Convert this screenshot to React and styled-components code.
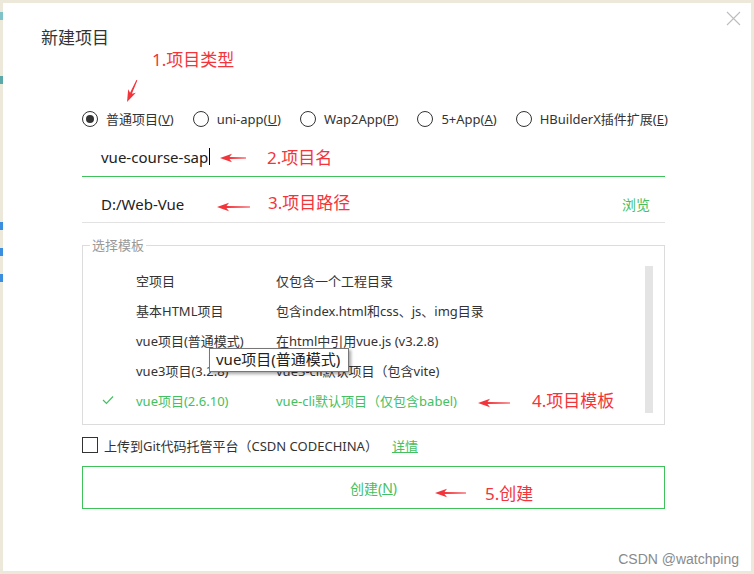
import React from "react";
import styled, { createGlobalStyle } from "styled-components";

const GREEN = "#44c062";
const LINE_GREEN = "#3fc25a";
const RED = "#f2353b";
const TEXT = "#333";
const FONT = `"Noto Sans", "Noto Sans CJK SC", sans-serif`;

const Global = createGlobalStyle`
  html, body { margin: 0; padding: 0; }
  body { font-family: ${FONT}; color: ${TEXT}; }
  * { box-sizing: border-box; }
`;

const mark = (c, y) => `linear-gradient(${c}, ${c}) 0 ${y}px / 3px 8px no-repeat`;

const Page = styled.div`
  width: 754px;
  height: 574px;
  background: ${mark("#7fc3c9", 12)}, ${mark("#5aa8a8", 76)}, ${mark("#3b8de0", 222)},
    ${mark("#3b8de0", 248)}, ${mark("#3b8de0", 274)}, #ece9db;
  padding: 3px;
  position: relative;
  overflow: hidden;
`;

const Dialog = styled.div`
  width: 748px;
  height: 568px;
  background: #fff;
  position: relative;
  padding-top: 23px;
`;

const Close = styled.svg`
  position: absolute;
  right: 10px;
  top: 8px;
`;

const Title = styled.div`
  margin-left: 38px;
  font-size: 17px;
  line-height: 24px;
  color: #333;
`;

const Body = styled.div`
  margin-left: 79px;
  width: 583px;
`;

const RadioRow = styled.div`
  margin-top: 59px;
  height: 20px;
  display: flex;
  align-items: center;
  gap: 19px;
`;

const Option = styled.label`
  display: flex;
  align-items: center;
  gap: 8px;
  font-size: 13px;
  line-height: 18px;
  color: ${TEXT};
  white-space: nowrap;
`;

const Radio = styled.span`
  width: 16px;
  height: 16px;
  border-radius: 50%;
  border: 1.5px solid #333;
  display: flex;
  align-items: center;
  justify-content: center;
  &::after {
    content: "";
    width: 8px;
    height: 8px;
    border-radius: 50%;
    background: ${(p) => (p.$checked ? "#333" : "transparent")};
  }
`;

const InputRow = styled.div`
  margin-top: 8px;
  height: 40px;
  border-bottom: 1px solid ${LINE_GREEN};
  padding-left: 19px;
  display: flex;
  align-items: center;
  font-size: 15px;
  color: #222;
`;

const Caret = styled.span`
  display: inline-block;
  width: 1px;
  height: 17px;
  background: #000;
  margin-left: 1px;
`;

const PathRow = styled.div`
  height: 46px;
  padding: 9px 15px 0 19px;
  border-bottom: 1px solid #e2e2e2;
  display: flex;
  align-items: center;
  justify-content: space-between;
  font-size: 15px;
  color: #222;
`;

const Browse = styled.span`
  font-size: 14px;
  color: ${GREEN};
`;

const Fieldset = styled.fieldset`
  margin: 13px 0 0 0;
  padding: 11px 11px 9px 7px;
  border: 1px solid #dcdcdc;
  display: flex;
  min-width: 0;
`;

const Legend = styled.legend`
  padding: 0 2px;
  font-size: 13px;
  line-height: 18px;
  color: #999;
`;

const List = styled.div`
  flex: 1;
`;

const TplRow = styled.div`
  display: grid;
  grid-template-columns: 46px 140px 1fr;
  height: 30px;
  align-items: center;
  font-size: 13px;
  color: ${(p) => (p.$active ? GREEN : TEXT)};
  white-space: nowrap;
`;

const Check = styled.span`
  padding-left: 12px;
  display: flex;
  align-items: center;
`;

const Scrollbar = styled.div`
  width: 8px;
  margin: 1px 0 2px;
  background: #e4e4e4;
`;

const CheckRow = styled.div`
  margin-top: 10px;
  height: 20px;
  display: flex;
  align-items: center;
  font-size: 13px;
  color: ${TEXT};
  white-space: nowrap;
`;

const Box = styled.span`
  width: 16px;
  height: 16px;
  border: 1.5px solid #333;
  margin-right: 6px;
`;

const Link = styled.span`
  margin-left: 14px;
  color: ${GREEN};
  text-decoration: underline;
`;

const CreateButton = styled.div`
  margin-top: 11px;
  height: 43px;
  border: 1px solid ${LINE_GREEN};
  display: flex;
  align-items: center;
  justify-content: center;
  font-size: 14px;
  color: ${GREEN};
`;

const Tooltip = styled.div`
  position: absolute;
  left: 206px;
  top: 345px;
  width: 140px;
  height: 24px;
  border: 1px solid #767676;
  background: #fff;
  box-shadow: 2px 2px 3px rgba(0, 0, 0, 0.35);
  font-size: 15px;
  line-height: 21px;
  padding-left: 6px;
  color: #222;
  white-space: nowrap;
`;

const Note = styled.div`
  position: absolute;
  left: ${(p) => p.$x}px;
  top: ${(p) => p.$y - 12}px;
  font-size: 17px;
  line-height: 24px;
  color: ${RED};
  white-space: nowrap;
`;

const ArrowSvg = styled.svg`
  position: absolute;
  left: ${(p) => p.$x}px;
  top: ${(p) => p.$y - 5}px;
  transform: rotate(${(p) => p.$angle || 0}deg);
  transform-origin: center;
`;

const Watermark = styled.div`
  position: absolute;
  right: 12px;
  bottom: 4px;
  font-family: "Liberation Sans", "Noto Sans", sans-serif;
  font-size: 14px;
  color: #8a8a8a;
`;

function Arrow({ x, y, len, angle }) {
  return (
    <ArrowSvg $x={x} $y={y} $angle={angle} width={len} height={10} viewBox={`0 0 ${len} 10`}>
      <polygon
        points={`0,5 12,0.8 9.5,4 ${len},4.5 ${len},5.5 9.5,6 12,9.2`}
        fill={RED}
      />
    </ArrowSvg>
  );
}

const options = [
  { label: "普通项目", key: "V", checked: true },
  { label: "uni-app", key: "U" },
  { label: "Wap2App", key: "P" },
  { label: "5+App", key: "A" },
  { label: "HBuilderX插件扩展", key: "E" },
];

const templates = [
  ["空项目", "仅包含一个工程目录"],
  ["基本HTML项目", "包含index.html和css、js、img目录"],
  ["vue项目(普通模式)", "在html中引用vue.js (v3.2.8)"],
  ["vue3项目(3.2.8)", "vue3-cli默认项目（包含vite)"],
  ["vue项目(2.6.10)", "vue-cli默认项目（仅包含babel)", true],
];

const notes = [
  { x: 152, y: 60, text: "1.项目类型", arrow: { x: 120, y: 91, len: 24, angle: -65.6 } },
  { x: 267, y: 158, text: "2.项目名", arrow: { x: 220, y: 158, len: 26 } },
  { x: 268, y: 203, text: "3.项目路径", arrow: { x: 217, y: 207, len: 33 } },
  { x: 532, y: 401, text: "4.项目模板", arrow: { x: 478, y: 403, len: 32 } },
  { x: 485, y: 494, text: "5.创建", arrow: { x: 435, y: 493, len: 31 } },
];

export default function App() {
  return (
    <>
      <Global />
      <Page>
        <Dialog>
          <Close width="15" height="15" viewBox="0 0 15 15">
            <path d="M1 1 L14 14 M14 1 L1 14" stroke="#bdbdbd" strokeWidth="1.1" />
          </Close>
          <Title>新建项目</Title>
          <Body>
            <RadioRow>
              {options.map((o) => (
                <Option key={o.key}>
                  <Radio $checked={o.checked} />
                  <span>
                    {o.label}(<u>{o.key}</u>)
                  </span>
                </Option>
              ))}
            </RadioRow>
            <InputRow>
              vue-course-sap
              <Caret />
            </InputRow>
            <PathRow>
              <span>D:/Web-Vue</span>
              <Browse>浏览</Browse>
            </PathRow>
            <Fieldset>
              <Legend>选择模板</Legend>
              <List>
                {templates.map(([a, b, active]) => (
                  <TplRow key={a} $active={active}>
                    <Check>
                      {active && (
                        <svg width="12" height="10" viewBox="0 0 12 10">
                          <path d="M1 5 L4.5 8.5 L11 1.5" stroke={GREEN} strokeWidth="1.2" fill="none" />
                        </svg>
                      )}
                    </Check>
                    <span>{a}</span>
                    <span>{b}</span>
                  </TplRow>
                ))}
              </List>
              <Scrollbar />
            </Fieldset>
            <CheckRow>
              <Box />
              上传到Git代码托管平台（CSDN CODECHINA）
              <Link>详情</Link>
            </CheckRow>
            <CreateButton>
              创建(<u>N</u>)
            </CreateButton>
          </Body>
          <Tooltip>vue项目(普通模式)</Tooltip>
          <Watermark>CSDN @watchping</Watermark>
        </Dialog>

        {notes.map((n) => (
          <React.Fragment key={n.text}>
            <Note $x={n.x} $y={n.y}>{n.text}</Note>
            <Arrow {...n.arrow} />
          </React.Fragment>
        ))}
      </Page>
    </>
  );
}
